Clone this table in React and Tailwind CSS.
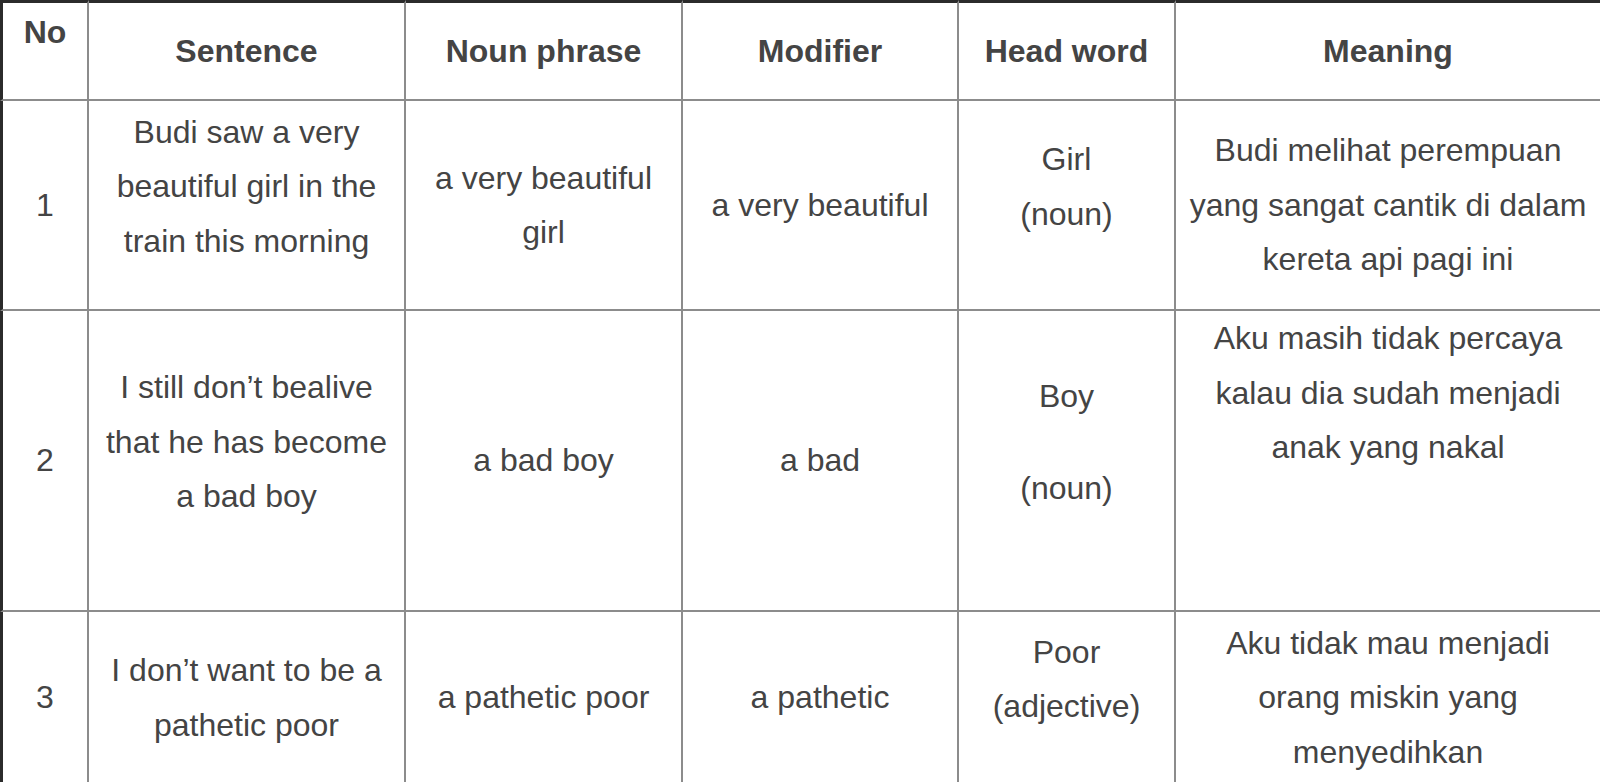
import React from 'react';

const rows = [
    {
        no: '1',
        sentence: { lines: ['Budi saw a very', 'beautiful girl in the', 'train this morning'], gap: true },
        phrase: { lines: ['a very beautiful', 'girl'] },
        modifier: { lines: ['a very beautiful'] },
        head: [{ lines: ['Girl', '(noun)'], gap: true }],
        meaning: { lines: ['Budi melihat perempuan', 'yang sangat cantik di dalam', 'kereta api pagi ini'] },
        height: 'h-[210px]',
    },
    {
        no: '2',
        sentence: { lines: ["I still don\u2019t bealive", 'that he has become', 'a bad boy'], gap: true },
        phrase: { lines: ['a bad boy'] },
        modifier: { lines: ['a bad'] },
        head: [{ lines: ['Boy'], gap: true }, { lines: ['(noun)'], gap: true }],
        meaning: { lines: ['Aku masih tidak percaya', 'kalau dia sudah menjadi', 'anak yang nakal'], top: true },
        height: 'h-[301px]',
    },
    {
        no: '3',
        sentence: { lines: ["I don\u2019t want to be a", 'pathetic poor'] },
        phrase: { lines: ['a pathetic poor'] },
        modifier: { lines: ['a pathetic'] },
        head: [{ lines: ['Poor', '(adjective)'], gap: true }],
        meaning: { lines: ['Aku tidak mau menjadi', 'orang miskin yang', 'menyedihkan'] },
        height: 'h-[173px]',
    },
];

const Para = ({ lines, gap }) => (
    <p className={gap ? 'mb-[37px]' : ''}>
        {lines.map((l, i) => (
            <React.Fragment key={i}>
                {i > 0 && <br />}
                {l}
            </React.Fragment>
        ))}
    </p>
);

const cell = 'border-r-2 border-b-2 border-[#8c8c8c] px-1 text-center align-middle whitespace-nowrap';

export default function App() {
    return (
        <div className="w-[1600px] h-[782px] overflow-hidden bg-white font-['Liberation_Sans',Arial,sans-serif]">
            <table className="table-fixed border-separate border-spacing-0 w-[1602px] text-[#444444] text-[32px] leading-[54.5px]">
                <colgroup>
                    <col className="w-[89px]" />
                    <col className="w-[317px]" />
                    <col className="w-[277px]" />
                    <col className="w-[276px]" />
                    <col className="w-[217px]" />
                    <col className="w-[426px]" />
                </colgroup>
                <thead>
                    <tr className="h-[101px] font-bold">
                        <th className={`${cell} border-t-[3px] border-t-[#2b2b2b] border-l-[3px] border-l-[#2b2b2b]`}>
                            <Para lines={['No']} gap />
                        </th>
                        <th className={`${cell} border-t-[3px] border-t-[#2b2b2b]`}>Sentence</th>
                        <th className={`${cell} border-t-[3px] border-t-[#2b2b2b]`}>Noun phrase</th>
                        <th className={`${cell} border-t-[3px] border-t-[#2b2b2b]`}>Modifier</th>
                        <th className={`${cell} border-t-[3px] border-t-[#2b2b2b]`}>Head word</th>
                        <th className={`${cell} border-t-[3px] border-t-[#2b2b2b]`}>Meaning</th>
                    </tr>
                </thead>
                <tbody>
                    {rows.map((r) => (
                        <tr key={r.no} className={r.height}>
                            <td className={`${cell} border-l-[3px] border-l-[#2b2b2b]`}>{r.no}</td>
                            <td className={cell}><Para {...r.sentence} /></td>
                            <td className={cell}><Para {...r.phrase} /></td>
                            <td className={cell}><Para {...r.modifier} /></td>
                            <td className={cell}>
                                {r.head.map((h, i) => <Para key={i} {...h} />)}
                            </td>
                            <td className={`${cell} ${r.meaning.top ? 'align-top' : ''}`}>
                                <Para lines={r.meaning.lines} />
                            </td>
                        </tr>
                    ))}
                </tbody>
            </table>
        </div>
    );
}
